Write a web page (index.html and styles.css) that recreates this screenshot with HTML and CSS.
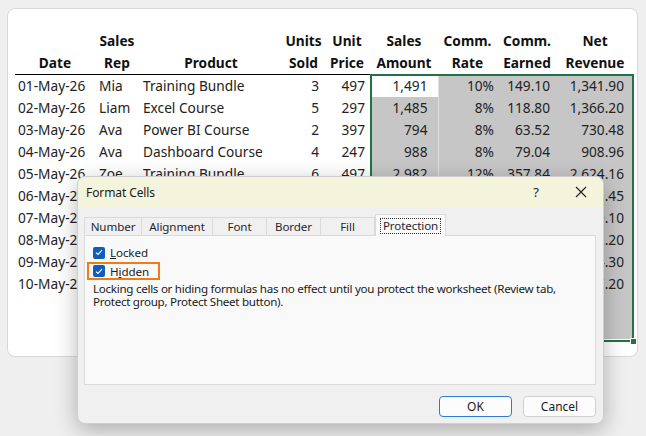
FILE: index.html
```html
<!DOCTYPE html>
<html>
<head>
<meta charset="utf-8">
<link rel="stylesheet" href="styles.css">
</head>
<body>
<div class="card">
  <table class="sheet">
    <colgroup>
      <col class="c-a"><col class="c-b"><col class="c-c"><col class="c-d"><col class="c-e"><col class="c-f"><col class="c-g"><col class="c-h"><col class="c-i">
    </colgroup>
    <thead>
      <tr>
        <th>Date</th><th>Sales<br>Rep</th><th>Product</th><th>Units<br>Sold</th><th>Unit<br>Price</th><th>Sales<br>Amount</th><th>Comm.<br>Rate</th><th>Comm.<br>Earned</th><th>Net<br>Revenue</th>
      </tr>
    </thead>
    <tbody>
      <tr><td class="dt">01-May-26</td><td class="tx">Mia</td><td class="tx">Training Bundle</td><td class="n-d">3</td><td class="n-e">497</td><td class="n-f active">1,491</td><td class="n-g sel">10%</td><td class="n-h sel">149.10</td><td class="n-i sel">1,341.90</td></tr>
      <tr><td class="dt">02-May-26</td><td class="tx">Liam</td><td class="tx">Excel Course</td><td class="n-d">5</td><td class="n-e">297</td><td class="n-f sel">1,485</td><td class="n-g sel">8%</td><td class="n-h sel">118.80</td><td class="n-i sel">1,366.20</td></tr>
      <tr><td class="dt">03-May-26</td><td class="tx">Ava</td><td class="tx">Power BI Course</td><td class="n-d">2</td><td class="n-e">397</td><td class="n-f sel">794</td><td class="n-g sel">8%</td><td class="n-h sel">63.52</td><td class="n-i sel">730.48</td></tr>
      <tr><td class="dt">04-May-26</td><td class="tx">Ava</td><td class="tx">Dashboard Course</td><td class="n-d">4</td><td class="n-e">247</td><td class="n-f sel">988</td><td class="n-g sel">8%</td><td class="n-h sel">79.04</td><td class="n-i sel">908.96</td></tr>
      <tr><td class="dt">05-May-26</td><td class="tx">Zoe</td><td class="tx">Training Bundle</td><td class="n-d">6</td><td class="n-e">497</td><td class="n-f sel">2,982</td><td class="n-g sel">12%</td><td class="n-h sel">357.84</td><td class="n-i sel">2,624.16</td></tr>
      <tr><td class="dt">06-May-26</td><td class="tx">Mia</td><td class="tx">Excel Course</td><td class="n-d">3</td><td class="n-e">297</td><td class="n-f sel">891</td><td class="n-g sel">10%</td><td class="n-h sel">89.10</td><td class="n-i sel">801.45</td></tr>
      <tr><td class="dt">07-May-26</td><td class="tx">Liam</td><td class="tx">Power BI Course</td><td class="n-d">2</td><td class="n-e">397</td><td class="n-f sel">794</td><td class="n-g sel">8%</td><td class="n-h sel">63.52</td><td class="n-i sel">730.10</td></tr>
      <tr><td class="dt">08-May-26</td><td class="tx">Ava</td><td class="tx">Excel Course</td><td class="n-d">4</td><td class="n-e">297</td><td class="n-f sel">1,188</td><td class="n-g sel">8%</td><td class="n-h sel">95.04</td><td class="n-i sel">1,092.20</td></tr>
      <tr><td class="dt">09-May-26</td><td class="tx">Zoe</td><td class="tx">Dashboard Course</td><td class="n-d">2</td><td class="n-e">247</td><td class="n-f sel">494</td><td class="n-g sel">8%</td><td class="n-h sel">39.52</td><td class="n-i sel">454.30</td></tr>
      <tr><td class="dt">10-May-26</td><td class="tx">Mia</td><td class="tx">Training Bundle</td><td class="n-d">1</td><td class="n-e">497</td><td class="n-f sel">497</td><td class="n-g sel">10%</td><td class="n-h sel">49.70</td><td class="n-i sel">447.20</td></tr>
      <tr><td></td><td></td><td></td><td></td><td></td><td class="sel"></td><td class="sel"></td><td class="sel"></td><td class="sel"></td></tr>
      <tr><td></td><td></td><td></td><td></td><td></td><td class="sel"></td><td class="sel"></td><td class="sel"></td><td class="sel"></td></tr>
    </tbody>
  </table>
</div>

<div class="selection"><span class="handle"></span></div>

<div class="dialog">
  <div class="titlebar">
    <span class="title">Format Cells</span>
    <span class="help">?</span>
    <span class="close">
      <svg width="12" height="12" viewBox="0 0 12 12"><path d="M1 1L11 11M11 1L1 11" stroke="#222" stroke-width="1.1" fill="none"/></svg>
    </span>
  </div>
  <div class="body">
    <div class="tabs">
      <span class="tab t-num">Number</span>
      <span class="tab t-align">Alignment</span>
      <span class="tab t-font">Font</span>
      <span class="tab t-border">Border</span>
      <span class="tab t-fill">Fill</span>
      <span class="tab active-tab"><span class="focus">Protection</span></span>
    </div>
    <div class="panel">
      <label class="check"><span class="box"><svg width="8" height="7" viewBox="0 0 8 7"><path d="M1 3.6L3 5.5L7 1.2" stroke="#fff" stroke-width="1.2" fill="none"/></svg></span><span><u>L</u>ocked</span></label>
      <label class="check hl"><span class="box"><svg width="8" height="7" viewBox="0 0 8 7"><path d="M1 3.6L3 5.5L7 1.2" stroke="#fff" stroke-width="1.2" fill="none"/></svg></span><span>H<u>i</u>dden</span></label>
      <p class="note">Locking cells or hiding formulas has no effect until you protect the worksheet (Review tab,<br>Protect group, Protect Sheet button).</p>
    </div>
    <div class="footer">
      <button class="btn ok">OK</button>
      <button class="btn">Cancel</button>
    </div>
  </div>
</div>
</body>
</html>
```

FILE: styles.css
```css
* { box-sizing: border-box; }
html, body { margin: 0; padding: 0; }
body {
  width: 646px;
  height: 436px;
  background: #efefef;
  position: relative;
  overflow: hidden;
  font-family: "Noto Sans", "Open Sans", sans-serif;
  color: #1a1a1a;
}
.card {
  position: absolute;
  left: 7px;
  top: 8px;
  width: 631px;
  height: 349px;
  background: #fff;
  border: 1px solid #d8d8d8;
  border-radius: 8px;
  padding: 21px 0 0 7px;
}
.sheet {
  border-collapse: collapse;
  table-layout: fixed;
  width: 618px;
  font-size: 13.7px;
  color: #222;
}
.c-a { width: 80px; } .c-b { width: 44px; } .c-c { width: 144px; }
.c-d { width: 41px; } .c-e { width: 46px; } .c-f { width: 68px; }
.c-g { width: 59px; } .c-h { width: 60px; } .c-i { width: 76px; }
.sheet th {
  font-weight: 700;
  line-height: 22px;
  padding: 0;
  text-align: center;
  vertical-align: bottom;
  border-bottom: 1.5px solid #000;
  white-space: nowrap;
  color: #111;
}
.sheet td {
  height: 22px;
  line-height: 22px;
  padding: 0;
  white-space: nowrap;
  overflow: hidden;
}
.dt { padding-left: 3px !important; }
.tx { padding-left: 4px !important; }
.n-d, .n-e, .n-f, .n-g, .n-h, .n-i { text-align: right; }
.n-d { padding-right: 5px !important; }
.n-e { padding-right: 5px !important; }
.n-f { padding-right: 10px !important; }
.n-g { padding-right: 3px !important; }
.n-h { padding-right: 7px !important; }
.n-i { padding-right: 9px !important; }
.sel { background: #c6c6c6; }
.active { background: #fff; }
.sheet td.n-f { border-right: 1px solid #e0e0e0; }
.selection {
  position: absolute;
  left: 370px;
  top: 74px;
  width: 264px;
  height: 268px;
  border: 2px solid #217346;
}
.handle {
  position: absolute;
  right: -5px;
  bottom: -5px;
  width: 7px;
  height: 7px;
  background: #217346;
  border: 1px solid #fff;
}
.dialog {
  position: absolute;
  left: 77px;
  top: 176px;
  width: 527px;
  height: 248px;
  background: #f0f0f0;
  border: 1px solid #cfcfcf;
  border-radius: 8px;
  box-shadow: 0 6px 22px rgba(0,0,0,0.28);
  overflow: hidden;
  font-size: 11.6px;
  letter-spacing: -0.1px;
  color: #1b1b1b;
}
.titlebar {
  height: 30px;
  background: #f4f4dd;
  display: flex;
  align-items: center;
  padding-left: 8px;
}
.title { flex: 1; font-size: 12px; }
.help { width: 14px; text-align: center; margin-right: 32px; font-size: 13px; }
.close { width: 12px; height: 12px; margin-right: 16px; display: flex; }
.body { padding: 10px 7px 0 6px; }
.tabs { display: flex; height: 18px; align-items: flex-end; }
.tab {
  height: 18px;
  border: 1px solid #dadada;
  border-bottom: none;
  border-left: none;
  display: flex;
  align-items: center;
  justify-content: center;
  color: #2a1f2f;
  background: #f0f0f0;
}
.t-num { width: 58px; border-left: 1px solid #dadada; }
.t-align { width: 71px; }
.t-font { width: 54px; }
.t-border { width: 54px; }
.t-fill { width: 54px; }
.active-tab {
  height: 22px;
  width: 71px;
  margin-bottom: -1px;
  background: #f9f9f9;
  border: 1px solid #dadada;
  border-bottom: none;
  position: relative;
  z-index: 1;
  display: flex;
  align-items: center;
  justify-content: center;
}
.focus { border: 1px dotted #333; padding: 0 2px; line-height: 14px; }
.panel {
  height: 150px;
  background: #f9f9f9;
  border: 1px solid #dadada;
  padding: 7px 0 0 8px;
}
.check {
  display: flex;
  align-items: center;
  gap: 5px;
  height: 19px;
}
.box {
  width: 12px;
  height: 12px;
  border-radius: 2px;
  background: #0f5fb8;
  display: flex;
  align-items: center;
  justify-content: center;
}
.hl {
  width: 73px;
  margin-left: -6px;
  padding-left: 4px;
  border: 2px solid #f07c16;
  height: 18px;
}
.note { margin: 3px 0 0 0; line-height: 12.5px; white-space: nowrap; letter-spacing: -0.28px; }
.footer {
  display: flex;
  justify-content: flex-end;
  gap: 11px;
  margin-top: 11px;
}
.btn {
  width: 73px;
  height: 21px;
  border: 1px solid #d0d0d0;
  border-radius: 4px;
  background: #fcfcfc;
  font-family: inherit;
  font-size: 12px;
  color: #1b1b1b;
  padding: 0;
}
.ok { border-color: #2a7bd4; }
```
